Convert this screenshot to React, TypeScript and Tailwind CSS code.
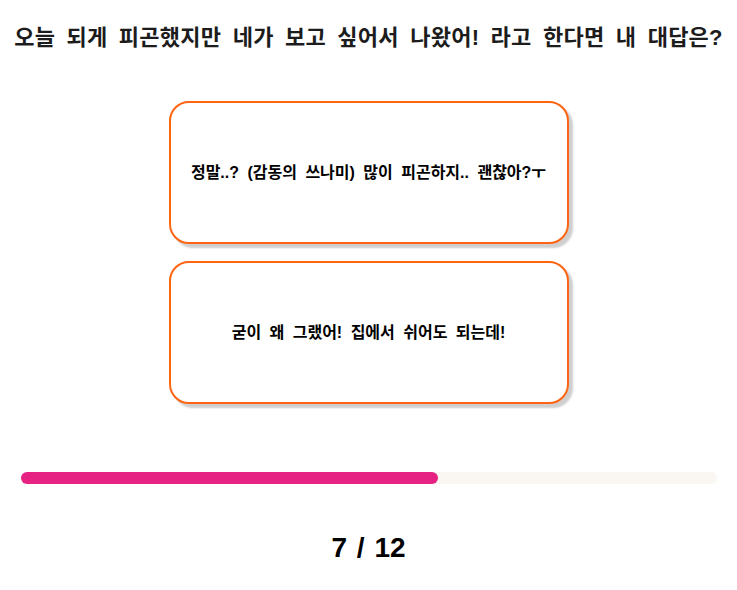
export default function App() {
  const font = { fontFamily: '"Liberation Sans", "Noto Sans CJK KR", sans-serif' };
  return (
    <div className="w-[737px] h-[590px] bg-white flex flex-col items-center" style={font}>
      <h1 className="mt-[22px] text-[22px] leading-[32px] tracking-[0.25px] [word-spacing:5px] font-bold text-[#1c1c1c] text-center whitespace-nowrap">
        오늘 되게 피곤했지만 네가 보고 싶어서 나왔어! 라고 한다면 내 대답은?
      </h1>
      <div className="mt-[47px] flex flex-col gap-[17px]">
        {["정말..? (감동의 쓰나미) 많이 피곤하지.. 괜찮아?ㅜ", "굳이 왜 그랬어! 집에서 쉬어도 되는데!"].map((t) => (
          <div
            key={t}
            className="w-[400px] h-[143px] rounded-[20px] border-2 border-[#ff6412] bg-white shadow-[4px_4px_2px_#cfcfcf] flex items-center justify-center text-[16px] [word-spacing:4px] font-bold text-black"
          >
            {t}
          </div>
        ))}
      </div>
      <div className="mt-[68px] w-[696px] h-[12px] rounded-full bg-[#faf6f2]">
        <div className="h-full rounded-full bg-[#e62383]" style={{ width: "60%" }} />
      </div>
      <div className="mt-[46px] text-[28px] leading-[36px] [word-spacing:2px] font-bold text-black">7 / 12</div>
    </div>
  );
}
